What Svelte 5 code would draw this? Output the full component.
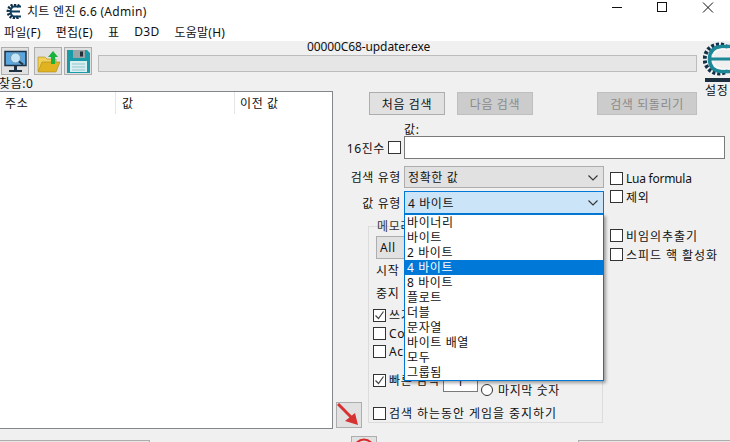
<script>
  const menus = ['파일(F)', '편집(E)', '표', 'D3D', '도움말(H)'];
  const types = ['바이너리', '바이트', '2 바이트', '4 바이트', '8 바이트', '플로트', '더블', '문자열', '바이트 배열', '모두', '그룹됨'];
</script>

<div class="win">
  <header class="title">
    <svg class="ce" width="16" height="15" viewBox="0 0 16 15">
      <path d="M14 2.500A6.500 6.500 0 1 0 14 12.500" fill="none" stroke="#0d2b45" stroke-width="3.500" stroke-dasharray="2 1.200" />
      <path d="M16 2.500H8.500Q5.500 4 5.500 7.500T8.500 12.500H16M6 7.500h9" fill="none" stroke="#0d3d5c" stroke-width="1.800" />
    </svg>
    <span class="title-text">치트 엔진 6.6 (Admin)</span>
    <svg class="winbtns" width="120" height="15" viewBox="0 0 120 15">
      <path d="M2 7.500h10" stroke="#111" />
      <rect x="47.500" y="2.500" width="9" height="9" fill="none" stroke="#111" />
      <path d="M93 2.500l10 10M103 2.500l-10 10" stroke="#111" />
    </svg>
  </header>

  <nav class="menu">
    {#each menus as m}<span>{m}</span>{/each}
  </nav>

  <section class="toolbar">
    <button class="tool" aria-label="프로세스">
      <svg width="25" height="25" viewBox="0 0 25 25">
        <rect x="2" y="2.500" width="21" height="14" fill="#5aa7e0" stroke="#1f3244" stroke-width="1.500" />
        <rect x="11" y="17" width="3" height="4" fill="#1f3244" />
        <rect x="6" y="21" width="13" height="2" fill="#1f3244" />
        <circle cx="12.500" cy="9" r="5" fill="#c5e4f5" stroke="#6f97b3" />
        <path d="M16 12.500l4 3" stroke="#26323c" stroke-width="2" />
      </svg>
    </button>
    <button class="tool second" aria-label="열기">
      <svg width="25" height="25" viewBox="0 0 25 25">
        <path d="M2 22V8h7l2 2h9v12z" fill="#f1cf58" stroke="#a98a1f" stroke-width=".6" />
        <path d="M2 23l4-10h18l-4 10z" fill="#e2b321" stroke="#a98a1f" stroke-width=".6" />
        <path d="M17 2l5 6h-3v7h-4V8h-3z" fill="#19b33c" />
      </svg>
    </button>
    <button class="tool" aria-label="저장">
      <svg width="25" height="25" viewBox="0 0 25 25">
        <path d="M1 1h20l3 3v20H1z" fill="#1a9aa6" />
        <rect x="7" y="1" width="12" height="8" fill="#9aa5a8" />
        <rect x="14" y="2.500" width="3" height="5" fill="#22303a" />
        <rect x="4" y="12" width="17" height="11" fill="#d9eef0" />
        <path d="M6 15h13M6 18h13M6 21h13" stroke="#8fc7cd" />
      </svg>
    </button>
    <div class="proc">
      <div class="proc-name">00000C68-updater.exe</div>
      <div class="progress"></div>
    </div>
  </section>

  <div class="logo">
    <svg width="27" height="40" viewBox="0 0 27 40">
      <path d="M25 5.500A14.500 14.500 0 1 0 25 28.500" fill="none" stroke="#123049" stroke-width="4" stroke-dasharray="3 1.800" />
      <path d="M27 4.500H18Q6.500 5.500 6.500 17T18 29.500H27" fill="none" stroke="#1b8797" stroke-width="3.500" />
      <path d="M7 17h20" stroke="#1b8797" stroke-width="3" />
      <path d="M27 7H19Q11 8.500 10 15M27 27H19Q11 25.500 10 19" fill="none" stroke="#fff" stroke-width="1" />
      <rect x="2" y="36" width="25" height="4" fill="#1b2f3f" />
    </svg>
    <span>설정</span>
  </div>

  <div class="found">찾음:0</div>

  <main class="body">
    <div class="left">
      <div class="list">
        <div class="list-head">
          <span class="c1">주소</span>
          <span class="c2">값</span>
          <span class="c3">이전 값</span>
        </div>
      </div>
    </div>

    <div class="right">
      <div class="actions">
        <button class="btn">처음 검색</button>
        <button class="btn off">다음 검색</button>
        <button class="btn off wide">검색 되돌리기</button>
      </div>

      <div class="val-label">값:</div>
      <div class="row hex">
        <label class="lbl">16진수<i class="cb"></i></label>
        <div class="input"></div>
      </div>

      <div class="row scan">
        <span class="lbl">검색 유형</span>
        <div class="select">정확한 값<svg class="chev" width="10" height="6" viewBox="0 0 10 6"><path d="M.5.500L5 5 9.500.500" fill="none" stroke="#333" stroke-width="1.100" /></svg></div>
        <div class="check up latin"><i class="cb"></i>Lua formula</div>
      </div>

      <div class="row vtype">
        <span class="lbl">값 유형</span>
        <div class="select open">4 바이트<svg class="chev" width="10" height="6" viewBox="0 0 10 6"><path d="M.5.500L5 5 9.500.500" fill="none" stroke="#333" stroke-width="1.100" /></svg></div>
        <div class="check up2"><i class="cb"></i>제외</div>

        <ul class="drop">
          {#each types as t}
            <li class:sel={t === '4 바이트'}>{t}</li>
          {/each}
        </ul>
      </div>

      <div class="lower">
        <div class="arrow-col">
          <button class="arrow" aria-label="추가">
            <svg width="24" height="24" viewBox="0 0 24 24">
              <path d="M1 1l15 15" stroke="#d63232" stroke-width="3" />
              <path d="M8 18l10-8 3 12z" fill="#d63232" />
            </svg>
          </button>
        </div>

        <div class="group">
          <div class="legend">메모리 스캔 옵션</div>
          <div class="select plain">All</div>
          <div class="addr">시작</div>
          <div class="addr">중지</div>
          <div class="check line first"><i class="cb on"><svg width="11" height="11" viewBox="0 0 11 11"><path d="M1.500 5.500l3 3 5-7" fill="none" stroke="#444" stroke-width="1.200" /></svg></i>쓰기 가능</div>
          <div class="check line"><i class="cb"></i>CopyOnWrite</div>
          <div class="check line"><i class="cb"></i>Active memory only</div>
          <div class="fast">
            <div class="check"><i class="cb on"><svg width="11" height="11" viewBox="0 0 11 11"><path d="M1.500 5.500l3 3 5-7" fill="none" stroke="#444" stroke-width="1.200" /></svg></i>빠른 검색</div>
            <div class="fast-input">1</div>
            <div class="radio"><i class="rd"></i>마지막 숫자</div>
          </div>
          <div class="check line pause"><i class="cb"></i>검색 하는동안 게임을 중지하기</div>
        </div>

        <div class="side">
          <div class="check"><i class="cb"></i>비임의추출기</div>
          <div class="check"><i class="cb"></i>스피드 핵 활성화</div>
        </div>
      </div>
    </div>
  </main>

  <footer class="bottom">
    <div class="bar left-bar"></div>
    <button class="stop" aria-label="중지">
      <svg width="24" height="24" viewBox="0 0 24 24"><circle cx="12" cy="12" r="9.500" fill="none" stroke="#d92b2b" stroke-width="2" /></svg>
    </button>
    <div class="bar right-bar"></div>
  </footer>
</div>

<style>
  :global(body) { margin: 0; background: #f0f0f0; overflow: hidden; }
  .win {
    width: 730px; height: 442px; overflow: hidden; position: relative; background: #f0f0f0;
    font-family: "Noto Sans", "Noto Sans CJK KR", sans-serif; font-size: 12px; color: #111; letter-spacing: .6px;
  }
  button { font: inherit; letter-spacing: inherit; padding: 0; margin: 0; display: block; }
  .cb {
    display: inline-flex; align-items: center; justify-content: center; box-sizing: border-box;
    width: 13px; height: 13px; border: 1px solid #333; background: #fff; flex: 0 0 auto;
  }

  .title { height: 22px; background: #fff; display: flex; align-items: center; position: relative; }
  .ce { margin-left: 5px; }
  .title-text { margin-left: 6px; letter-spacing: .3px; }
  .winbtns { position: absolute; left: 610px; top: 0; }

  .menu { height: 19px; background: #fff; display: flex; align-items: center; gap: 15px; padding-left: 4px; letter-spacing: .25px; }

  .toolbar { height: 50px; box-sizing: border-box; padding: 6px 0 0 1px; display: flex; }
  .tool {
    width: 28px; height: 28px; box-sizing: border-box; margin-right: 2px; background: #e1e1e1; border: 1px solid #adadad;
    display: flex; align-items: center; justify-content: center;
  }
  .second { margin-left: 3px; }
  .proc { margin-left: 4px; width: 599px; margin-top: -7px; }
  .proc-name { height: 14px; line-height: 14px; padding-right: 58px; text-align: center; letter-spacing: -.1px; }
  .progress { height: 17px; box-sizing: border-box; margin-top: 1px; background: #e6e6e6; border: 1px solid #bcbcbc; }

  .logo { position: absolute; left: 703px; top: 42px; width: 27px; }
  .logo svg { display: block; }
  .logo span { position: absolute; left: 2px; top: 42px; white-space: nowrap; line-height: 14px; }

  .found { position: absolute; left: -1px; top: 77px; line-height: 14px; }

  .body { display: flex; height: 338px; }
  .left { width: 333px; flex: 0 0 auto; }
  .list { height: 338px; box-sizing: border-box; background: #fff; border-top: 1px solid #82878c; border-right: 1px solid #82878c; border-bottom: 1px solid #82878c; }
  .list-head { display: flex; height: 22px; align-items: center; }
  .list-head span { box-sizing: border-box; height: 100%; display: flex; align-items: center; padding-left: 5px; }
  .c1 { width: 116px; border-right: 1px solid #e5e5e5; }
  .c2 { width: 119px; border-right: 1px solid #e5e5e5; padding-left: 6px !important; }
  .c3 { flex: 1; }

  .right { width: 397px; flex: 0 0 auto; position: relative; }
  .actions { display: flex; padding: 1px 0 0 36px; }
  .btn { width: 76px; height: 23px; box-sizing: border-box; margin-right: 12px; background: #e1e1e1; border: 1px solid #adadad; color: #111; }
  .btn.off { background: #cccccc; border-color: #bfbfbf; color: #8a8a8a; }
  .btn.wide { width: 100px; margin-left: 52px; margin-right: 0; }

  .val-label { margin: 8px 0 0 71px; height: 13px; line-height: 13px; }
  .row { display: flex; position: relative; }
  .lbl { width: 68px; margin-right: 3px; text-align: right; display: flex; justify-content: flex-end; align-items: center; gap: 1px; height: 100%; white-space: nowrap; }
  .hex { height: 23px; }
  .hex .lbl { gap: 3px; }
  .input { width: 321px; height: 23px; box-sizing: border-box; background: #fff; border: 1px solid #7a7a7a; }

  .scan { margin-top: 7px; height: 22px; }
  .vtype { margin-top: 3px; height: 23px; }
  .select {
    width: 200px; box-sizing: border-box; background: #e1e1e1; border: 1px solid #adadad; display: flex; align-items: center; padding-left: 3px; position: relative;
  }
  .select.open { background: #cce4f7; border-color: #0078d7; }
  .select.plain { width: 225px; height: 23px; }
  .chev { position: absolute; right: 5px; top: 8px; }
  .check { display: flex; align-items: center; gap: 3px; white-space: nowrap; }
  .latin { letter-spacing: -.25px; }
  .up { margin: 6px 0 0 6px; height: 13px; }
  .up2 { margin: -1px 0 0 6px; height: 13px; }

  .drop {
    position: absolute; left: 71px; top: 23px; width: 200px; box-sizing: border-box; margin: 0; padding: 0; list-style: none; z-index: 5;
    background: #fff; border: 1px solid #0078d7; box-shadow: 2px 2px 3px rgba(0, 0, 0, .35);
  }
  .drop li { height: 15px; line-height: 15px; padding-left: 2px; }
  .drop li.sel { background: #0078d7; color: #fff; }

  .lower { display: flex; margin-top: 12px; height: 197px; }
  .arrow-col { width: 35px; flex: 0 0 auto; display: flex; align-items: flex-end; }
  .arrow {
    width: 26px; height: 26px; box-sizing: border-box; margin: 0 0 -5px 3px; background: #e1e1e1; border: 1px solid #adadad;
    display: flex; align-items: center; justify-content: center;
  }
  .group { width: 235px; height: 197px; box-sizing: border-box; border: 1px solid #dcdcdc; padding-left: 7px; flex: 0 0 auto; }
  .legend { margin-top: -7px; height: 14px; line-height: 14px; padding-left: 1px; color: #333; white-space: nowrap; }
  .group .select.plain { margin-top: 2px; }
  .addr { height: 23px; line-height: 23px; }
  .line { height: 18px; margin-left: -3px; }
  .first { margin-top: 1px; }
  .line + .line { margin-top: 0; }
  .fast { display: flex; height: 20px; margin: 12px 0 0 -3px; align-items: center; position: relative; }
  .fast .check { margin-bottom: 4px; width: 70px; }
  .fast-input { width: 35px; height: 20px; box-sizing: border-box; border: 1px solid #7a7a7a; background: #fff; text-align: center; line-height: 18px; }
  .radio { display: flex; align-items: center; gap: 5px; margin-left: 3px; height: 14px; align-self: flex-end; margin-bottom: -5px; white-space: nowrap; }
  .rd { width: 12px; height: 12px; box-sizing: border-box; border-radius: 50%; border: 1px solid #333; background: #fff; }
  .pause { margin-top: 12px; letter-spacing: .95px; }
  .side { margin: 3px 0 0 7px; display: flex; flex-direction: column; gap: 6px; letter-spacing: .95px; }
  .side .check { height: 13px; }

  .bottom { position: relative; height: 13px; }
  .bar { position: absolute; top: 11px; height: 10px; box-sizing: border-box; background: #e6e6e6; border: 1px solid #adadad; }
  .left-bar { left: -1px; width: 151px; }
  .right-bar { left: 578px; width: 160px; }
  .stop {
    position: absolute; left: 351px; top: 7px; width: 26px; height: 26px; box-sizing: border-box; background: #e1e1e1; border: 1px solid #adadad;
    display: flex; align-items: center; justify-content: center;
  }
</style>
